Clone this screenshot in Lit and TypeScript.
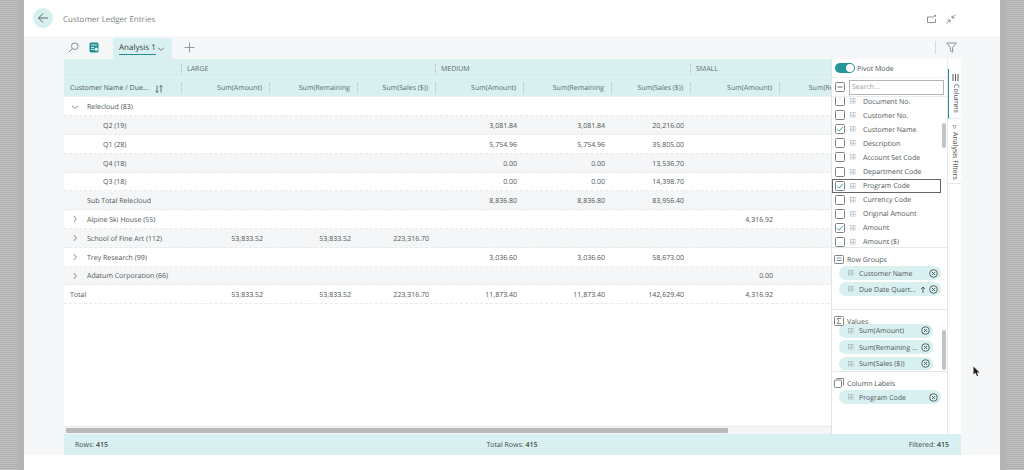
import { LitElement, css, html, svg } from 'lit';
import { customElement } from 'lit/decorators.js';

type Row = { label: string; kind: string; values: string[] };

const COLS = ['Sum(Amount)', 'Sum(Remaining', 'Sum(Sales ($))', 'Sum(Amount)', 'Sum(Remaining', 'Sum(Sales ($))', 'Sum(Amount)', 'Sum(Remaining'];

const ROWS: Row[] = [
  { label: 'Relecloud (83)', kind: 'open', values: [] },
  { label: 'Q2 (19)', kind: 'leaf', values: ['', '', '', '3,081.84', '3,081.84', '20,216.00'] },
  { label: 'Q1 (28)', kind: 'leaf', values: ['', '', '', '5,754.96', '5,754.96', '35,805.00'] },
  { label: 'Q4 (18)', kind: 'leaf', values: ['', '', '', '0.00', '0.00', '13,536.70'] },
  { label: 'Q3 (18)', kind: 'leaf', values: ['', '', '', '0.00', '0.00', '14,398.70'] },
  { label: 'Sub Total Relecloud', kind: 'sub', values: ['', '', '', '8,836.80', '8,836.80', '83,956.40'] },
  { label: 'Alpine Ski House (55)', kind: 'closed', values: ['', '', '', '', '', '', '4,316.92'] },
  { label: 'School of Fine Art (112)', kind: 'closed', values: ['53,833.52', '53,833.52', '223,316.70'] },
  { label: 'Trey Research (99)', kind: 'closed', values: ['', '', '', '3,036.60', '3,036.60', '58,673.00'] },
  { label: 'Adatum Corporation (66)', kind: 'closed', values: ['', '', '', '', '', '', '0.00'] },
  { label: 'Total', kind: 'total', values: ['53,833.52', '53,833.52', '223,316.70', '11,873.40', '11,873.40', '142,629.40', '4,316.92'] },
];

const FIELDS: [string, boolean][] = [
  ['Document No.', false],
  ['Customer No.', false],
  ['Customer Name', true],
  ['Description', false],
  ['Account Set Code', false],
  ['Department Code', false],
  ['Program Code', true],
  ['Currency Code', false],
  ['Original Amount', false],
  ['Amount', true],
  ['Amount ($)', false],
];

const grip = html`<svg class="grip" width="6" height="6" viewBox="0 0 6 6"><path d="M.5 0v6M2 0v6M3.5 0v6M5 0v6" stroke="#8b9696" stroke-width=".7" stroke-dasharray="1 .5"/></svg>`;

const closeIcon = html`<svg class="close" width="9" height="9" viewBox="0 0 9 9" fill="none" stroke="#4a5555" stroke-width=".9"><circle cx="4.5" cy="4.5" r="3.8"/><path d="M3 3l3 3M6 3L3 6"/></svg>`;

const chevronDown = svg`<path d="M2 3.8L5 6.3l3-2.5" fill="none" stroke="#666" stroke-width=".8"/>`;
const chevronRight = svg`<path d="M3.8 2L6.3 5l-2.5 3" fill="none" stroke="#666" stroke-width=".8"/>`;

@customElement('app-root')
export class AppRoot extends LitElement {
  static styles = css`
:host {
  display: block;
  width: 1024px;
  height: 470px;
  overflow: hidden;
  position: relative;
  font-family: "Open Sans", "Noto Sans", sans-serif;
  font-size: 7px;
  color: #4f5656;
  text-rendering: geometricPrecision;
}
.page {
  display: flex;
  height: 470px;
}
.gutter {
  width: 24px;
  flex: none;
  background: #b6b6b6;
}
.gutter.left {
  background:
    linear-gradient(90deg, transparent 18px, #b4b4b4 18px),
    repeating-linear-gradient(0deg, #bfbfbf 0 1px, #b0b0b0 1px 2px);
}
.gutter.right {
  background:
    linear-gradient(90deg, #b4b4b4 6px, transparent 6px),
    repeating-linear-gradient(0deg, #bfbfbf 0 1px, #b0b0b0 1px 2px);
}
.window {
  flex: 1;
  display: flex;
  flex-direction: column;
  background: #fff;
  min-width: 0;
}
.head {
  height: 36px;
  flex: none;
  display: flex;
  align-items: center;
  padding: 0 40px 0 9px;
}
.back {
  width: 20px;
  height: 20px;
  border-radius: 50%;
  background: #d6efef;
  display: flex;
  align-items: center;
  justify-content: center;
  margin-right: 10px;
}
.title {
  font-size: 8px;
  color: #7b8080;
  margin-right: auto;
  padding-top: 3px;
}
.head-icons {
  display: flex;
  gap: 9px;
  margin-right: 4px;
  padding-top: 2px;
}
.main {
  flex: 1;
  min-height: 0;
  background: #f5f7f9;
  padding: 0 39px 0 40px;
  display: flex;
  flex-direction: column;
}
.toolbar {
  height: 23px;
  flex: none;
  display: flex;
  align-items: center;
  padding-left: 4px;
}
.toolbar .teal {
  margin-left: 10px;
}
.tab {
  margin-left: 14px;
  align-self: flex-end;
  width: 59px;
  height: 21px;
  box-sizing: border-box;
  padding-left: 6px;
  background: #d9f0f0;
  display: flex;
  align-items: center;
  font-size: 8px;
  color: #333b3b;
  border-radius: 1px 1px 0 0;
  white-space: nowrap;
}
.tab span {
  border-bottom: 1px solid #1f8f92;
  line-height: 12px;
}
.plus {
  margin-left: 12px;
}
.filter {
  margin-left: auto;
  height: 13px;
  padding-left: 10px;
  border-left: 1px solid #d4dcdc;
  display: flex;
  align-items: center;
  margin-right: 4px;
}
.body {
  flex: 1;
  min-height: 0;
  display: flex;
}
.grid-area {
  width: 767px;
  flex: none;
  display: flex;
  flex-direction: column;
  background: #fff;
  overflow: hidden;
}
.rows {
  flex: 1;
  min-height: 0;
  padding-top: .5px;
}
.grow {
  display: grid;
  grid-template-columns: 117px 88px 88px 78px 88px 88px 79px 89px 88px;
  width: 825px;
}
.band {
  height: 19px;
  background: #d9f0f0;
  border-bottom: 1px solid #e9f2f2;
  box-sizing: border-box;
  align-items: center;
}
.band > div {
  position: relative;
  white-space: nowrap;
  box-sizing: border-box;
  padding-top: 3px;
}
.band > .sep::before {
  content: '';
  position: absolute;
  left: 0;
  top: 2px;
  height: 10px;
  border-left: 1px dotted #a9c2c2;
}
.group {
  padding-left: 6px;
  color: #5d6b6b;
}
.colhead {
  text-align: right;
  padding-right: 7px;
  color: #5d6b6b;
}
.first {
  padding-left: 6px;
  display: flex;
  justify-content: space-between;
  align-items: center;
  padding-right: 18px;
}
.row {
  height: 18.8px;
  box-sizing: border-box;
  border-bottom: 1px dashed #e6eaea;
  align-items: center;
  background: #fff;
  padding-top: 2.5px;
}
.row.alt {
  background: #f5f6f7;
}
.cell {
  text-align: right;
  padding-right: 6px;
  white-space: nowrap;
}
.label {
  display: flex;
  align-items: center;
  white-space: nowrap;
}
.label svg {
  margin: -2px 7px 0 6px;
  flex: none;
}
.label.leaf {
  padding-left: 39px;
}
.label.sub {
  padding-left: 23px;
}
.label.plain {
  padding-left: 6px;
}
.scroll {
  height: 8px;
  flex: none;
  padding: 1px 0 1px 2px;
  box-sizing: border-box;
  background: #f4f5f6;
  border-top: 1px solid #e8ecec;
}
.thumb {
  width: 662px;
  height: 100%;
  background: #b9b9b9;
  border-radius: 1px;
}
.panel {
  width: 117px;
  flex: none;
  display: flex;
  flex-direction: column;
  background: #fff;
  border-left: 1px solid #dfe4e4;
  border-right: 1px solid #e6eaea;
  box-sizing: border-box;
}
.panel span {
  padding-top: 2px;
}
.pivot {
  height: 19px;
  flex: none;
  display: flex;
  align-items: center;
  padding-left: 3px;
  gap: 2px;
  border-bottom: 1px dotted #dfe6e6;
  box-sizing: border-box;
}
.toggle {
  width: 20px;
  height: 10px;
  border-radius: 5px;
  background: #23979a;
  position: relative;
}
.toggle::after {
  content: '';
  position: absolute;
  right: 1px;
  top: 1px;
  width: 8px;
  height: 8px;
  border-radius: 50%;
  background: #fff;
}
.searchrow {
  height: 19px;
  flex: none;
  display: flex;
  align-items: center;
  padding-left: 3px;
  gap: 4px;
  box-sizing: border-box;
  border-bottom: 1px solid #e8ecec;
}
.box {
  width: 10px;
  height: 10px;
  flex: none;
  border: 1px solid #7b8383;
  border-radius: 1.5px;
  box-sizing: border-box;
  background: #fff;
  display: flex;
  align-items: center;
  justify-content: center;
}
.search {
  width: 95px;
  height: 15px;
  border: 1px solid #aeb6b6;
  box-sizing: border-box;
  padding-left: 2px;
  line-height: 13px;
  color: #9aa2a2;
}
.fields {
  height: 151px;
  flex: none;
  position: relative;
  overflow: hidden;
  border-bottom: 1px solid #e3e8e8;
  box-sizing: border-box;
}
.list {
  margin-top: -3px;
}
.field {
  height: 14.1px;
  display: flex;
  align-items: center;
  padding-left: 3px;
  box-sizing: border-box;
  margin-right: 6px;
}
.field .grip {
  margin: 0 7px 0 5px;
}
.field.focus {
  outline: 1px solid #666;
  outline-offset: -1px;
}
.vbar {
  position: absolute;
  right: 1px;
  width: 4px;
  background: #c0c4c4;
  border-radius: 2px;
}
.section {
  flex: none;
  position: relative;
  box-sizing: border-box;
  border-bottom: 1px solid #e3e8e8;
  padding-left: 7px;
}
.section.last {
  border-bottom: 0;
  flex: 1;
}
.sec-head {
  display: flex;
  align-items: center;
  gap: 3px;
  height: 12px;
  margin: 5px 0 1px -5px;
}
.narrow .sec-head {
  margin-bottom: -3px;
}
.pill {
  height: 14px;
  border-radius: 7px;
  background: #d9f0f0;
  display: flex;
  align-items: center;
  padding: 0 3px 0 9px;
  box-sizing: border-box;
  margin-bottom: 2.4px;
  white-space: nowrap;
}
.pill .grip {
  margin-right: 5px;
}
.pill .close {
  margin-left: auto;
}
.pill .up {
  margin-left: auto;
  margin-right: 3px;
}
.pill .up + .close {
  margin-left: 0;
}
.wide .pill {
  width: 102px;
}
.narrow .pill {
  width: 94px;
  margin-bottom: 2.6px;
}
.clip {
  height: 46px;
  overflow: hidden;
}
.clip .inner {
  margin-top: -.5px;
}
.rail {
  width: 13px;
  flex: none;
  background: #fff;
  padding-top: 10px;
  box-sizing: border-box;
}
.vtab {
  writing-mode: vertical-rl;
  display: flex;
  align-items: center;
  gap: 3px;
  box-sizing: border-box;
  border-bottom: 1px solid #e3e8e8;
  white-space: nowrap;
  padding: 5px 0 3px;
  width: 13px;
  color: #454d4d;
}
.vtab.on {
  height: 50px;
  border-left: 1px solid #1f8f92;
}
.vtab.off {
  height: 65px;
  padding-top: 6px;
}
.status {
  height: 21px;
  flex: none;
  background: #d9f0f0;
  display: grid;
  grid-template-columns: 1fr auto 1fr;
  align-items: center;
  padding: 2px 12px 0 11px;
  box-sizing: border-box;
  color: #3f4a4a;
}
.status b {
  font-weight: 600;
}
.status div:last-child {
  text-align: right;
}
.foot {
  height: 15px;
  flex: none;
  background: #fff;
}
.cursor {
  position: absolute;
  left: 973px;
  top: 366px;
}
`;

  renderRow(r: Row, i: number) {
    const cells = [];
    for (let c = 0; c < 8; c++) cells.push(html`<div class="cell">${r.values[c] ?? ''}</div>`);
    let label;
    if (r.kind === 'leaf') label = html`<div class="label leaf">${r.label}</div>`;
    else if (r.kind === 'sub') label = html`<div class="label sub">${r.label}</div>`;
    else if (r.kind === 'total') label = html`<div class="label plain">${r.label}</div>`;
    else label = html`<div class="label"><svg width="10" height="10" viewBox="0 0 10 10">${r.kind === 'open' ? chevronDown : chevronRight}</svg>${r.label}</div>`;
    return html`<div class="grow row ${i % 2 ? 'alt' : ''}">${label}${cells}</div>`;
  }

  renderField(f: [string, boolean]) {
    return html`<div class="field ${f[0] === 'Program Code' ? 'focus' : ''}">
      <div class="box">${f[1] ? html`<svg width="8" height="8" viewBox="0 0 8 8"><path d="M1 4.2l2 2 4-4.4" fill="none" stroke="#2b9a9d" stroke-width=".9"/></svg>` : ''}</div>
      ${grip}<span>${f[0]}</span>
    </div>`;
  }

  pill(text: string, up = false) {
    return html`<div class="pill">${grip}<span>${text}</span>${up ? html`<svg class="up" width="6" height="7" viewBox="0 0 6 7"><path d="M3 7V1M1 3l2-2 2 2" fill="none" stroke="#4a5555" stroke-width=".9"/></svg>` : ''}${closeIcon}</div>`;
  }

  render() {
    return html`
<div class="page">
  <div class="gutter left"></div>
  <div class="window">
    <div class="head">
      <div class="back">
        <svg width="12" height="12" viewBox="0 0 12 12" fill="none" stroke="#555" stroke-width=".9"><path d="M11 6H1.5M6 1.5L1.5 6 6 10.5"/></svg>
      </div>
      <div class="title">Customer Ledger Entries</div>
      <div class="head-icons">
        <svg width="10" height="10" viewBox="0 0 10 10" fill="none" stroke="#6f7878" stroke-width=".8"><path d="M7 3H.5v5.5h8V5"/><path d="M8 .8v2" stroke="#1f8f92"/><path d="M7 1.8h2" stroke="#1f8f92"/></svg>
        <svg width="10" height="10" viewBox="0 0 10 10" fill="none" stroke="#6f7878" stroke-width=".8"><path d="M9.5.5L6 4M6 1.5V4h2.5M.5 9.5L4 6M1.5 6H4v2.5"/></svg>
      </div>
    </div>
    <div class="main">
      <div class="toolbar">
        <svg width="11" height="11" viewBox="0 0 11 11" fill="none" stroke="#7b8383" stroke-width=".9"><circle cx="6.8" cy="4.2" r="3.3"/><path d="M4.4 6.6L.8 10.2"/></svg>
        <svg class="teal" width="10" height="11" viewBox="0 0 10 11"><rect x=".5" y=".5" width="9" height="10" rx="1.5" fill="#1f8f92"/><path d="M2 3h6M2 5.5h3M2 7.5h3" stroke="#fff" stroke-width=".8"/><circle cx="7.3" cy="7.3" r="1.7" fill="#d9f0f0"/></svg>
        <div class="tab"><span>Analysis 1</span>
          <svg width="10" height="10" viewBox="0 0 10 10">${chevronDown}</svg>
        </div>
        <svg class="plus" width="11" height="11" viewBox="0 0 11 11"><path d="M5.5 .5v10M.5 5.5h10" stroke="#7b8383" stroke-width=".8"/></svg>
        <div class="filter">
          <svg width="11" height="11" viewBox="0 0 11 11" fill="none" stroke="#6f7878" stroke-width=".8"><path d="M.7 1h9.6L6.6 5.6v4.6L4.4 9V5.6z"/></svg>
        </div>
      </div>
      <div class="body">
        <div class="grid-area">
          <div class="grow band">
            <div></div>
            <div class="group sep" style="grid-column: span 3">LARGE</div>
            <div class="group sep" style="grid-column: span 3">MEDIUM</div>
            <div class="group sep" style="grid-column: span 2">SMALL</div>
          </div>
          <div class="grow band">
            <div class="first"><span>Customer Name / Due...</span>
              <svg width="8" height="8" viewBox="0 0 8 8" fill="none" stroke="#4a5555" stroke-width=".8"><path d="M2 .5v7M.4 5.8L2 7.5l1.6-1.7M6 7.5v-7M4.4 2.2L6 .5l1.6 1.7"/></svg>
            </div>
            ${COLS.map(c => html`<div class="colhead sep">${c}</div>`)}
          </div>
          <div class="rows">${ROWS.map((r, i) => this.renderRow(r, i))}</div>
          <div class="scroll"><div class="thumb"></div></div>
        </div>
        <div class="panel">
          <div class="pivot"><div class="toggle"></div><span>Pivot Mode</span></div>
          <div class="searchrow">
            <div class="box"><svg width="8" height="8" viewBox="0 0 8 8"><path d="M1.5 4h5" stroke="#555" stroke-width=".9"/></svg></div>
            <div class="search">Search...</div>
          </div>
          <div class="fields">
            <div class="list">${FIELDS.map(f => this.renderField(f))}</div>
            <div class="vbar" style="top: 26px; height: 25px"></div>
          </div>
          <div class="section wide" style="height: 62px">
            <div class="sec-head">
              <svg width="10" height="9" viewBox="0 0 10 9" fill="none" stroke="#5f6868" stroke-width=".8"><rect x=".5" y=".5" width="9" height="8" rx="1"/><path d="M3 3h4.5M3 5.5h4.5"/></svg>
              <span>Row Groups</span>
            </div>
            ${this.pill('Customer Name')}
            ${this.pill('Due Date Quart...', true)}
          </div>
          <div class="section narrow" style="height: 62px">
            <div class="sec-head">
              <svg width="10" height="10" viewBox="0 0 10 10" fill="none" stroke="#5f6868" stroke-width=".8"><rect x=".5" y=".5" width="9" height="9" rx="1"/><path d="M7 2.5H3l2 2.5-2 2.5h4"/></svg>
              <span>Values</span>
            </div>
            <div class="clip"><div class="inner">
              ${this.pill('Sum(Amount)')}
              ${this.pill('Sum(Remaining ...')}
              ${this.pill('Sum(Sales ($))')}
            </div></div>
            <div class="vbar" style="top: 20px; height: 40px"></div>
          </div>
          <div class="section wide last">
            <div class="sec-head">
              <svg width="10" height="10" viewBox="0 0 10 10" fill="none" stroke="#5f6868" stroke-width=".8"><rect x=".5" y="2" width="7" height="7.5" rx="1"/><path d="M2.5 .5h7v7"/></svg>
              <span>Column Labels</span>
            </div>
            ${this.pill('Program Code')}
          </div>
        </div>
        <div class="rail">
          <div class="vtab on">
            <svg width="7" height="7" viewBox="0 0 7 7"><path d="M1 0v7M3.5 0v7M6 0v7" stroke="#555" stroke-width="1"/></svg>
            <span>Columns</span>
          </div>
          <div class="vtab off">
            <svg width="7" height="7" viewBox="0 0 7 7" fill="none" stroke="#555" stroke-width=".8"><path d="M.5.5h6L3.5 6.5z"/></svg>
            <span>Analysis Filters</span>
          </div>
        </div>
      </div>
      <div class="status">
        <div>Rows: <b>415</b></div>
        <div>Total Rows: <b>415</b></div>
        <div>Filtered: <b>415</b></div>
      </div>
    </div>
    <div class="foot"></div>
  </div>
  <div class="gutter right"></div>
</div>
<svg class="cursor" width="7" height="11" viewBox="0 0 7 11"><path d="M.5.5v8l2-1.8L4 10l1.2-.6-1.4-3H6.5z" fill="#222"/></svg>
`;
  }
}
